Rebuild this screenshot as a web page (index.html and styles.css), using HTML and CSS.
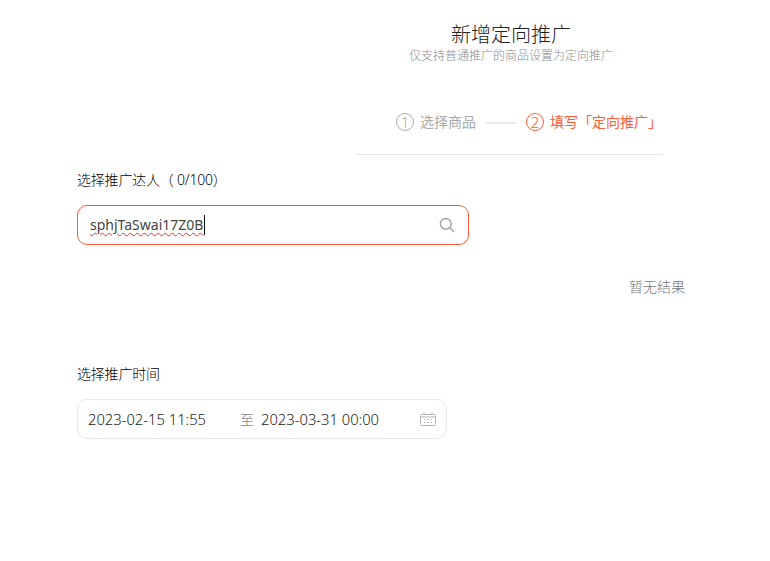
FILE: index.html
```html
<!DOCTYPE html>
<html lang="zh-CN">
<head>
<meta charset="utf-8">
<title>新增定向推广</title>
<link rel="stylesheet" href="styles.css">
</head>
<body>
<div class="page">
  <header class="head">
    <h1 class="title">新增定向推广</h1>
    <p class="subtitle">仅支持普通推广的商品设置为定向推广</p>
  </header>
  <div class="steps">
    <div class="step"><span class="num">1</span><span>选择商品</span></div>
    <span class="step-line"></span>
    <div class="step active"><span class="num">2</span><span>填写「定向推广」</span></div>
  </div>
  <section class="form">
    <div class="label">选择推广达人（ 0/100）</div>
    <div class="box search">
      <span class="typed"><span class="squiggle">sphjTaSwai17Z0B</span></span>
      <svg class="search-icon" width="16" height="16" viewBox="0 0 16 16" fill="none" stroke="#a6a6a6" stroke-width="1.5" stroke-linecap="round"><circle cx="6.8" cy="6.8" r="5.4"/><path d="M10.8 10.8L14.5 14.5"/></svg>
    </div>
    <div class="empty">暂无结果</div>
    <div class="label time-label">选择推广时间</div>
    <div class="box range">
      <span class="date">2023-02-15 11:55</span>
      <span class="to">至</span>
      <span class="date">2023-03-31 00:00</span>
      <svg class="cal-icon" width="16" height="14" viewBox="0 0 16 14" fill="none" stroke="#b5b5b5" stroke-width="1"><rect x="0.5" y="2.5" width="15" height="11" rx="1"/><path d="M4 0.5V3M12 0.5V3M0.5 5H15.5"/><path d="M4 7.5h1.5M7.25 7.5h1.5M10.5 7.5H12M4 10.5h1.5M7.25 10.5h1.5M10.5 10.5H12"/></svg>
    </div>
  </section>
</div>
</body>
</html>
```
FILE: styles.css
```css
* { box-sizing: border-box; }
html, body { margin: 0; height: 100%; background: #fff; overflow: hidden; }
body { font-family: "Noto Sans", "Noto Sans CJK SC", sans-serif; color: #333; }
.page { width: 770px; height: 561px; padding: 22px 0 0 77px; display: flex; flex-direction: column; }
.head { width: 460px; margin-left: 204px; display: flex; flex-direction: column; align-items: center; }
.title { margin: 0; font-size: 20px; line-height: 26px; font-weight: 300; color: #222; }
.subtitle { margin: 0; font-size: 12px; line-height: 16px; font-weight: 300; color: #8c8c8c; }
.steps { margin: 47px 0 0 279px; width: 307px; height: 44px; border-bottom: 1px solid #e6e6e6; display: flex; align-items: flex-start; padding-left: 40px; font-size: 14px; line-height: 22px; color: #aaa; }
.step { display: flex; align-items: center; gap: 6px; }
.step.active { color: #ff5c38; }
.num { width: 18px; height: 18px; border: 1px solid currentColor; border-radius: 50%; display: flex; align-items: center; justify-content: center; font-size: 15px; font-weight: 300; }
.step-line { width: 30px; height: 2px; margin: 11px 10px 0; background: #e8e8e8; }
.form { display: flex; flex-direction: column; align-items: flex-start; }
.label { font-size: 14px; line-height: 18px; font-weight: 300; letter-spacing: -0.2px; color: #000; margin-top: 16px; }
.box { display: flex; align-items: center; height: 40px; background: #fff; }
.search { width: 392px; margin-top: 16px; padding: 0 13px 0 12px; border: 1px solid #ff5c38; border-radius: 10px; justify-content: space-between; font-size: 14px; }
.typed { border-right: 1px solid #111; padding-right: 1px; line-height: 20px; color: #444; }
.squiggle { text-decoration: underline wavy #f03030 1px; text-underline-offset: 2px; }
.search-icon { flex: none; }
.empty { margin-top: 33px; width: 608px; text-align: right; font-size: 14px; line-height: 18px; font-weight: 300; color: #777; }
.time-label { margin-top: 69px; }
.range { width: 370px; margin-top: 16px; padding: 0 10px; border: 1px solid #e8e8e8; border-radius: 10px; font-size: 14.75px; font-weight: 300; color: #222; }
.date { white-space: nowrap; }
.to { margin: 0 7px 0 34px; font-size: 14px; color: #888; }
.cal-icon { margin-left: auto; flex: none; }
```
